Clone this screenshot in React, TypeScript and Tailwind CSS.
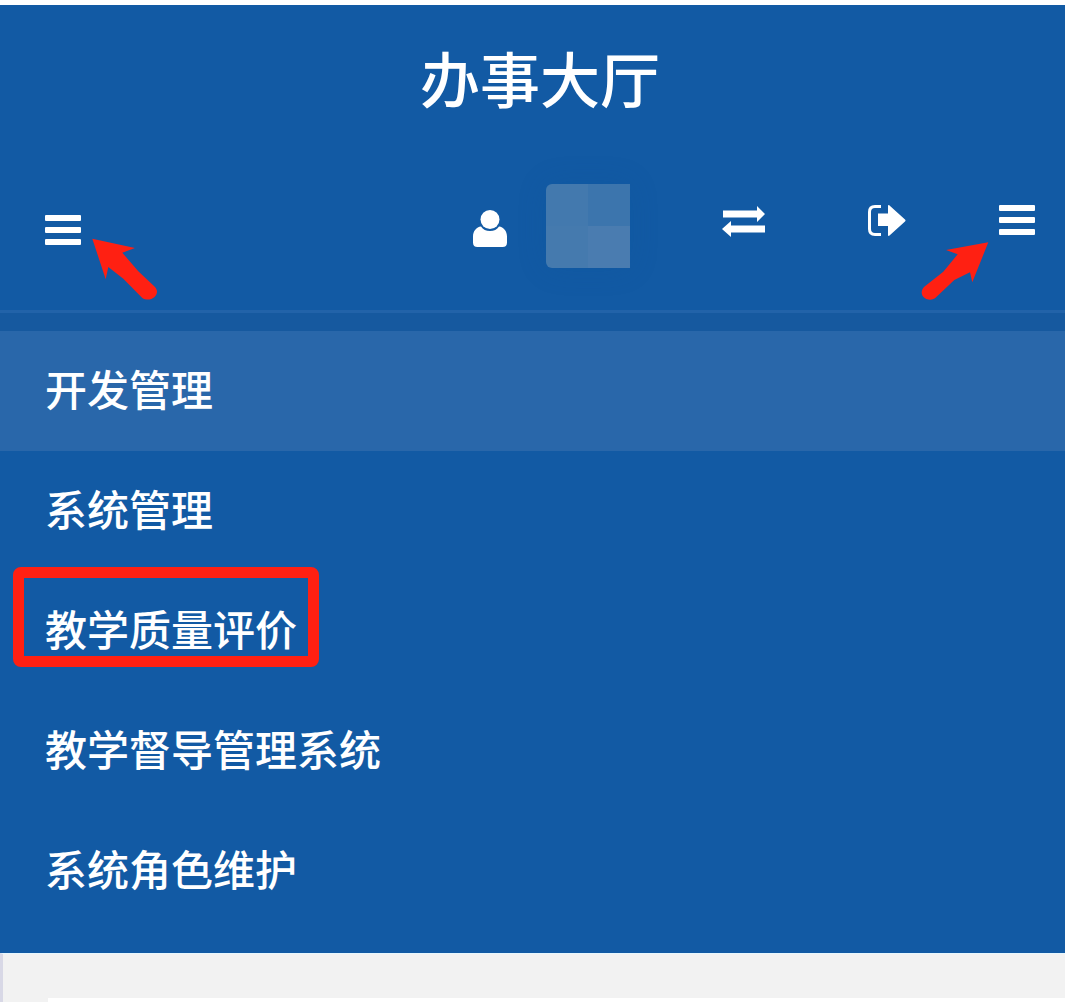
import React from 'react';

const menuItems = ['开发管理', '系统管理', '教学质量评价', '教学督导管理系统', '系统角色维护'];

const Bars = ({ className }: { className: string }) => (
  <svg viewBox="0 0 36 31" className={className} fill="#fff">
    <rect x="0" y="0" width="36" height="6" rx="1" />
    <rect x="0" y="12" width="36" height="6" rx="1" />
    <rect x="0" y="24" width="36" height="6" rx="1" />
  </svg>
);

const UserIcon = ({ className }: { className: string }) => (
  <svg viewBox="0 0 34 37" className={className} fill="#fff">
    <circle cx="17" cy="9.500" r="9.500" />
    <path d="M8 16.500c2 3 5 4.500 9 4.500s7-1.500 9-4.500c4.500.5 8 4.500 8 10v6c0 3-1.500 4.500-4.500 4.500h-25C1.500 37 0 35.500 0 32.500v-6c0-5.500 3.500-9.500 8-10z" />
  </svg>
);

const SwapIcon = ({ className }: { className: string }) => (
  <svg viewBox="0 0 44 32" className={className} fill="#fff">
    <path d="M1 4.500h34V0l8 8-8 8v-4.500H1z" />
    <path d="M43 19.500H9V15l-9 8 9 8v-4.500h34z" />
  </svg>
);

const LogoutIcon = ({ className }: { className: string }) => (
  <svg viewBox="0 0 38 31" className={className}>
    <path d="M13 1.500H7C3.500 1.500 1.500 3.500 1.500 7v17c0 3.500 2 5.500 5.500 5.500h6" fill="none" stroke="#fff" strokeWidth="3" />
    <path d="M10 8.500h10V1c0-1 .8-1.200 1.500-.5L37 14.500c.7.7.7 1.300 0 2L21.500 30.500c-.7.7-1.500.5-1.500-.5v-9H10z" fill="#fff" />
  </svg>
);

const App = () => {
  return (
    <div className="relative h-[1002px] w-full overflow-hidden bg-white pt-[5px] font-['Noto_Sans_CJK_SC',sans-serif]">
      <header className="bg-[#125aa4]">
        <h1 className="flex h-[150px] items-center justify-center pb-[6px] pl-[15px] text-[60px] font-medium text-white">办事大厅</h1>
        <div className="flex h-[158px] items-start border-b-[3px] border-[#2263a9] pl-[45px]">
          <Bars className="mt-[60px] h-[31px] w-[36px]" />
          <UserIcon className="ml-[392px] mt-[55px] h-[37px] w-[34px]" />
          <div className="ml-[39px] mt-[29px] grid h-[84px] w-[84px] grid-cols-2 grid-rows-2 overflow-hidden rounded-l-md shadow-[0_0_30px_rgba(15,80,150,0.15)]">
            <div className="bg-[#4379ae]" />
            <div className="bg-[#3c75ad]" />
            <div className="bg-[#457aae]" />
            <div className="bg-[#4a7cb0]" />
          </div>
          <SwapIcon className="ml-[92px] mt-[51px] h-[32px] w-[44px]" />
          <LogoutIcon className="ml-[102px] mt-[50px] h-[31px] w-[38px]" />
          <Bars className="ml-[93px] mt-[50px] h-[31px] w-[36px]" />
        </div>
      </header>
      <nav className="bg-[#125aa4] pb-[22px]">
        <div className="h-[18px] bg-[#16599f]" />
        {menuItems.map((item, idx) => (
          <div key={item} className={`relative flex h-[120px] items-center pb-[8px] pl-[45px] text-[42px] font-medium text-white ${idx === 0 ? 'bg-[#2967aa]' : ''}`}>
            {item}
            {idx === 2 && (
              <div className="absolute left-[13px] top-[-4px] h-[100px] w-[306px] rounded-lg border-[11px] border-[#ff2012]" />
            )}
          </div>
        ))}
      </nav>
      <div className="h-[49px] border-l-[3px] border-t border-[#d8d8e6] border-t-[#e6f7ff] bg-[#f2f2f2] pl-[45px] pt-[44px]">
        <div className="h-full bg-white" />
      </div>

      {/* red annotation arrows */}
      <svg viewBox="0 0 1065 1002" className="pointer-events-none absolute inset-0 h-[1002px] w-[1065px]" fill="#ff2012">
        <path d="M92.300 238.700L135 248l-12.700 4.700 16 18.600L155 287c3 3.500 2.500 7-.5 10s-8.500 3.500-12.200 1l-19-19.300-15-11.700-2.600 12.300z" />
        <path d="M988.300 242.300L946 250l11.700 4.300-14.400 17.400-19 15c-3 3-3.500 7-1 10s8 4 11.700 1.600l19.300-18.300 15.700-7.700 2.300 10z" />
      </svg>
    </div>
  );
};

export default App;
